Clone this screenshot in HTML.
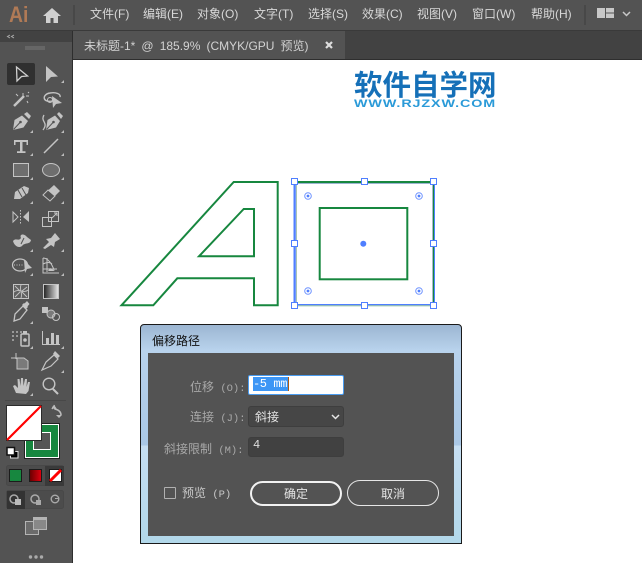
<!DOCTYPE html>
<html><head><meta charset="utf-8">
<style>
html,body{margin:0;padding:0;background:#fff}
#p{position:relative;width:642px;height:563px;overflow:hidden;background:#fff;font-family:"Liberation Sans","Noto Sans CJK SC",sans-serif}
.a{position:absolute;white-space:nowrap}
.m{top:6px;font-size:12px;line-height:16px;color:#d8d8d8}
.d{font-size:12px;line-height:16px;color:#a8a8a8;font-family:"Liberation Sans","Noto Sans CJK SC",sans-serif}
.d span{font-family:"Liberation Mono",monospace;font-size:10.5px}
svg{position:absolute;left:0;top:0}
</style></head><body><div id="p">
<div class="a" style="left:0;top:0;width:642px;height:30px;background:#535353;border-bottom:1px solid #3a3a3a"></div>
<div class="a" style="left:0;top:31px;width:642px;height:29px;background:#424242"></div>
<div class="a" style="left:73px;top:31px;width:569px;height:28px;background:#424242;border-bottom:1px solid #2e2e2e"></div>
<div class="a" style="left:73px;top:31px;width:272px;height:28px;background:#535353"></div>
<div class="a" style="left:0;top:31px;width:72px;height:532px;background:#535353;border-right:1px solid #3a3a3a"></div>
<div class="a" style="left:0;top:31px;width:72px;height:11px;background:#424242"></div>
<div class="a" style="left:72px;top:31px;width:1px;height:532px;background:#2e2e2e"></div>
<div class="a" style="left:9px;top:2px;font-size:22px;line-height:26px;font-weight:bold;color:#b07a56;transform:scaleX(.88);transform-origin:left">Ai</div>
<div class="a m" style="left:90px">文件(F)</div>
<div class="a m" style="left:143px">编辑(E)</div>
<div class="a m" style="left:197px">对象(O)</div>
<div class="a m" style="left:254px">文字(T)</div>
<div class="a m" style="left:308px">选择(S)</div>
<div class="a m" style="left:362px">效果(C)</div>
<div class="a m" style="left:417px">视图(V)</div>
<div class="a m" style="left:472px">窗口(W)</div>
<div class="a m" style="left:531px">帮助(H)</div>
<div class="a" style="left:84px;top:38px;font-size:12px;line-height:16px;color:#d2d2d2;word-spacing:2.75px">未标题-1* @ 185.9% (CMYK/GPU 预览)</div>
<div class="a" style="left:354px;top:66px;font-size:28.5px;line-height:36px;font-weight:bold;color:#1570b8;font-family:'Noto Sans CJK SC',sans-serif">软件自学网</div>
<div class="a" style="left:354px;top:98px;font-size:11px;line-height:12px;font-weight:bold;color:#2a9ad8;letter-spacing:.7px;transform:scaleX(1.3);transform-origin:left">WWW.RJZXW.COM</div>

<svg width="642" height="563" viewBox="0 0 642 563">
<!-- top bar icons -->
<path d="M52 8 L43 16 H46 V23 H50.5 V18 H53.5 V23 H58 V16 H61 Z" fill="#d0d0d0"/>
<rect x="73" y="5" width="2" height="20" fill="#484848"/>
<rect x="584" y="5" width="2" height="20" fill="#484848"/>
<rect x="597" y="8" width="8" height="10" fill="#c8c8c8"/><rect x="606" y="8" width="8" height="4.500" fill="#c8c8c8"/><rect x="606" y="13.500" width="8" height="4.500" fill="#c8c8c8"/>
<path d="M623 12 L626.5 15.5 L630 12" fill="none" stroke="#c8c8c8" stroke-width="1.5"/>
<path d="M326 42 L332 48 M332 42 L326 48" stroke="#ddd" stroke-width="2.2"/>
<path d="M10 35 L7.500 36.500 L10 38 M14 35 L11.500 36.500 L14 38" fill="none" stroke="#aaa" stroke-width="1"/>
<path d="M26 46v4M28 46v4M30 46v4M32 46v4M34 46v4M36 46v4M38 46v4M40 46v4M42 46v4M44 46v4" stroke="#7a7a7a" stroke-width="1"/>

<!-- tools -->
<g fill="#c4c4c4" stroke="none">
<rect x="7" y="63" width="28" height="22" rx="2" fill="#303030"/>
<path d="M16.500 67 L27.500 76 L21.500 76.500 L17 81 Z" fill="none" stroke="#cfcfcf" stroke-width="1.300"/>
<path d="M46 66 L58 76.500 L51 77 L46 82 Z"/>
<path d="M64 80v3h-3z" fill="#bbb"/>
<!-- wand -->
<path d="M14 106 L24 96" stroke="#c4c4c4" stroke-width="2.500"/><path d="M23 93v3M26 96h3M16 94l2 2M27 101l1 2M28 92l1 1" stroke="#c4c4c4" stroke-width="1"/>
<!-- lasso w/ arrow -->
<path d="M52 101 C42 103 42 94 50 93 C56 92 61 94 60 97" fill="none" stroke="#c4c4c4" stroke-width="1.400"/><circle cx="50" cy="100" r="2.500" fill="none" stroke="#c4c4c4"/><path d="M52 96 L62 103 L56 104 L53 108 Z"/>
<!-- pen -->
<path d="M13 130 L14.500 120 L22 115.500 L28 121 L23.500 127.500 Z"/><path d="M24 114 L29 119 L31 116 L27 112 Z"/><path d="M13.500 129.500 L20 122.500" stroke="#535353"/><circle cx="20.500" cy="122" r="1.300" fill="#535353"/><path d="M33 130v3h-3z" fill="#bbb"/>
<path d="M46 130 L47.500 120 L55 115.500 L60 121 L56 127.500 Z"/><path d="M57 114 L61 119 L63 116 L59 112 Z"/><path d="M46.500 129.500 L53 122.500" stroke="#535353"/><circle cx="53.500" cy="122" r="1.300" fill="#535353"/><path d="M44 115 C40 122 49 122 43 130" fill="none" stroke="#c4c4c4" stroke-width="1.300"/><path d="M64 130v3h-3z" fill="#bbb"/>
<!-- T -->
<path d="M14 140 H28 V145 H26.500 V142 H22.500 V151.300 H25.500 V153 H17 V151.300 H20 V142 H15.500 V145 H14 Z"/><path d="M33 153v3h-3z" fill="#bbb"/>
<path d="M44 153 L58 139" stroke="#c4c4c4" stroke-width="1.500"/><path d="M64 153v3h-3z" fill="#bbb"/>
<!-- rect, ellipse -->
<rect x="13.500" y="163.500" width="15" height="13" fill="#6e6e6e" stroke="#c4c4c4"/><path d="M33 177v3h-3z" fill="#bbb"/>
<ellipse cx="51" cy="170" rx="8.500" ry="6.500" fill="#6e6e6e" stroke="#c4c4c4"/><path d="M64 177v3h-3z" fill="#bbb"/>
<!-- brush, eraser -->
<path d="M14 199 L15 192 L24 186 L29 188 L28 193 L20 199 Z"/><path d="M18 190l4 7M22 188l4 7" stroke="#535353" stroke-width="1"/><path d="M33 201v3h-3z" fill="#bbb"/>
<path d="M43 195 L54 185 L60 191 L50 201 Z"/><path d="M43 195 L48 190 L55 196 L50 201 Z" fill="#535353" stroke="#c4c4c4"/><path d="M64 201v3h-3z" fill="#bbb"/>
<!-- reflect, scale -->
<path d="M13 212 L18 217 L13 222 Z" fill="none" stroke="#c4c4c4"/><path d="M29 211 L23 217 L29 222 Z"/><path d="M20.500 210v14" stroke="#c4c4c4" stroke-dasharray="1.500 1.500"/>
<rect x="42.500" y="217.500" width="9" height="9" fill="none" stroke="#c4c4c4"/><rect x="48.500" y="211.500" width="10" height="10" fill="none" stroke="#c4c4c4"/><path d="M52 218 L57 213 M54 213h3v3" fill="none" stroke="#c4c4c4"/>
<!-- warp, pin -->
<path d="M13 241 C16 237 18 242 21 238 C19 234 24 233 27 237 L31 240 C30 245 25 242 22 246 C18 249 14 245 13 241 Z"/><path d="M15 236 l4 3 M24 238l-3 6" stroke="#535353"/><path d="M33 249v3h-3z" fill="#bbb"/>
<path d="M43 248 L49 242 L46 239 L51 238 L55 233 L60 239 L55 242 L54 247 L51 245 L45 249 Z"/><path d="M64 249v3h-3z" fill="#bbb"/>
<!-- shape builder, mesh -->
<ellipse cx="20" cy="265" rx="7.500" ry="6" fill="none" stroke="#c4c4c4" stroke-width="1.200"/><path d="M14 265h9" stroke="#c4c4c4" stroke-dasharray="1 1.500"/><path d="M24 260 L32 268 L27 269 L25 273 Z"/><path d="M33 273v3h-3z" fill="#bbb"/>
<path d="M43 258 V273 H59 M43 258 C48 258 52 264 54 270 M43 264 C47 262 50 262 52 264 M47 258 L47 272 M43 269 H57" fill="none" stroke="#c4c4c4" stroke-width="1"/><path d="M50 268 L55 271 H48Z"/><path d="M64 273v3h-3z" fill="#bbb"/>
<!-- mesh, gradient -->
<rect x="13.500" y="284.500" width="15" height="14" fill="#606060" stroke="#c4c4c4"/><path d="M14 292 C18 288 24 294 28 290 M21 285 C19 290 23 293 21 298 M15 286l5 5M27 287l-5 4M15 297l5-5M27 297l-5-5" fill="none" stroke="#c4c4c4" stroke-width=".9"/>
<defs><linearGradient id="g"><stop offset="0" stop-color="#222"/><stop offset="1" stop-color="#e8e8e8"/></linearGradient></defs>
<rect x="43.500" y="284.500" width="15" height="14" fill="url(#g)" stroke="#c4c4c4"/>
<!-- eyedropper, blend -->
<path d="M14 321 L15 314 L23 306 L27 310 L20 319 Z" fill="none" stroke="#c4c4c4" stroke-width="1.300"/><path d="M22 305 L24 303 L27 306 L28 307 L26 309 Z M24 304 L27 301 L29.500 304 L27 307 Z"/><path d="M33 321v3h-3z" fill="#bbb"/>
<rect x="42" y="307" width="6" height="6"/><circle cx="51" cy="314" r="4" fill="#7a7a7a" stroke="#c4c4c4"/><circle cx="56" cy="317" r="3.500" fill="none" stroke="#c4c4c4"/>
<!-- spray, chart -->
<path d="M12 331h2v2h-2zM16 331h2v2h-2zM20 331h2v2h-2zM12 335h2v2h-2zM16 335h2v2h-2zM12 339h2v2h-2z" fill="#999"/><rect x="21" y="334" width="8" height="12" rx="1" fill="none" stroke="#c4c4c4" stroke-width="1.500"/><rect x="23" y="331" width="4" height="3"/><circle cx="25" cy="340" r="1.800"/><path d="M33 346v3h-3z" fill="#bbb"/>
<path d="M42.500 331 V344.500 H60" fill="none" stroke="#c4c4c4"/><rect x="46" y="338" width="3" height="6"/><rect x="51" y="333" width="3" height="11"/><rect x="56" y="335" width="3" height="9"/><path d="M64 346v3h-3z" fill="#bbb"/>
<!-- artboard, slice -->
<path d="M11 358h6M16 353v6" stroke="#c4c4c4"/><path d="M17 358 H24 L28 361 V369 H17 Z" fill="#7a7a7a" stroke="#c4c4c4"/><path d="M42 370 L46 362 L54 355 L58 359 L51 366 Z" fill="none" stroke="#c4c4c4" stroke-width="1.200"/><path d="M53 354 L55 351 L60 356 L58 358 Z"/><path d="M64 370v3h-3z" fill="#bbb"/>
<!-- hand, zoom -->
<path d="M16 393 L13 386 L15 385 L18 388 L17.500 379 L19.500 379 L20.500 386 L21 378 L23 378 L23.500 386 L25 379 L27 379 L26.500 387 L28 382 L30 382 L28.500 391 L26 394 Z"/><path d="M33 393v3h-3z" fill="#bbb"/>
<circle cx="49" cy="384" r="5.800" fill="none" stroke="#c4c4c4" stroke-width="1.400"/><path d="M53 389 L58 394" stroke="#c4c4c4" stroke-width="2"/>
</g>
<rect x="5" y="400" width="61" height="1" fill="#484848"/>

<!-- fill/stroke -->
<rect x="24.500" y="423.500" width="35" height="35" fill="#fff" stroke="#222" stroke-width="1"/>
<rect x="26" y="425" width="32" height="32" fill="#17873f"/>
<rect x="33.500" y="432.500" width="17" height="17" fill="#555" stroke="#fff" stroke-width="1"/>
<rect x="6.500" y="405.500" width="35" height="35" fill="#fff" stroke="#2b2b2b"/>
<path d="M7 440 L41 406" stroke="#f00" stroke-width="2.200"/>
<path d="M52 409 L54 406 L56 409 H55 C59 410 61 412 61 415" fill="none" stroke="#bbb" stroke-width="1.500"/><path d="M56 415 H62 L59 418 Z M52 407 L55 405 V410 Z" fill="#bbb"/>
<rect x="10.500" y="451.500" width="7.500" height="6.500" fill="#000" stroke="#ddd"/><rect x="7" y="447.500" width="7.500" height="7.500" fill="#fff" stroke="#111" stroke-width="1.500"/>
<rect x="6.500" y="465.500" width="57" height="20" rx="2" fill="#4c4c4c" stroke="#484848"/>
<rect x="45" y="466" width="19" height="20" fill="#3a3a3a"/>
<rect x="9.500" y="469.500" width="12" height="12" fill="#17873f" stroke="#1c1c1c"/>
<defs><linearGradient id="r"><stop offset="0" stop-color="#600"/><stop offset="1" stop-color="#e00010"/></linearGradient></defs>
<rect x="29.500" y="469.500" width="12" height="12" fill="url(#r)" stroke="#1c1c1c"/>
<rect x="49.500" y="469.500" width="12" height="12" fill="#fff" stroke="#1c1c1c"/><path d="M50 481 L61 470" stroke="#f00" stroke-width="3"/>
<rect x="6.500" y="490.500" width="57" height="18" rx="2" fill="#4c4c4c" stroke="#484848"/>
<rect x="7" y="491" width="18" height="18" fill="#333"/>
<circle cx="14" cy="499" r="4" fill="none" stroke="#aaa" stroke-width="1.500"/><rect x="15" y="499" width="6" height="6" fill="#bbb"/>
<circle cx="35" cy="499" r="4" fill="none" stroke="#aaa" stroke-width="1.500"/><rect x="36" y="500" width="5" height="5" fill="#aaa"/>
<circle cx="55" cy="499" r="3.800" fill="none" stroke="#aaa" stroke-width="1.400"/><path d="M55 499h4v-1h-4z" fill="#aaa"/>
<rect x="25.500" y="521.500" width="13" height="13" fill="#6b6b6b" stroke="#b4b4b4"/><rect x="33.500" y="517.500" width="13" height="12" fill="#888" stroke="#b4b4b4"/><rect x="33" y="517" width="14" height="3" fill="#b4b4b4"/>
<circle cx="30.500" cy="557" r="1.700" fill="#aaa"/><circle cx="36" cy="557" r="1.700" fill="#aaa"/><circle cx="41.500" cy="557" r="1.700" fill="#aaa"/>

<!-- artwork -->
<path d="M233.700 182 H277.700 V305.300 H254 V278.300 H177.300 L153.300 305.300 H121.500 Z M243.700 209 L199 256.300 H254 V209 Z" fill="none" stroke="#17873f" stroke-width="2"/>
<!-- selection frame edges -->
<rect x="295" y="183" width="138" height="1" fill="#9cb4d0"/>
<rect x="295" y="181" width="139" height="2" fill="#17873f"/>
<rect x="296" y="183" width="1" height="121" fill="#a8c4b4"/>
<rect x="293.500" y="181" width="2.300" height="125" fill="#4f7fff"/>
<rect x="432" y="183" width="1" height="122" fill="#a8b8c8"/>
<rect x="433" y="181" width="1" height="124" fill="#17873f"/>
<rect x="434" y="181" width="1" height="125" fill="#4f7fff"/>
<rect x="295" y="304" width="139" height="1.300" fill="#4f7fff"/>
<rect x="295" y="305.300" width="139" height="1" fill="#8fbfa0"/>
<rect x="319.700" y="208" width="87.600" height="71.300" fill="none" stroke="#17873f" stroke-width="2"/>
<circle cx="363.300" cy="243.700" r="3" fill="#4f7fff"/>
<g fill="#fff" stroke="#4f7fff">
<rect x="291.500" y="178.500" width="6" height="6"/><rect x="361.500" y="178.500" width="6" height="6"/><rect x="430.500" y="178.500" width="6" height="6"/>
<rect x="291.500" y="240.500" width="6" height="6"/><rect x="430.500" y="240.500" width="6" height="6"/>
<rect x="291.500" y="302.500" width="6" height="6"/><rect x="361.500" y="302.500" width="6" height="6"/><rect x="430.500" y="302.500" width="6" height="6"/>
</g>
<g fill="none" stroke="#6f94ff">
<circle cx="308" cy="196" r="3.300"/><circle cx="419" cy="196" r="3.300"/><circle cx="308" cy="291" r="3.300"/><circle cx="419" cy="291" r="3.300"/>
</g>
<g fill="#4f7fff"><circle cx="308" cy="196" r="1.400"/><circle cx="419" cy="196" r="1.400"/><circle cx="308" cy="291" r="1.400"/><circle cx="419" cy="291" r="1.400"/></g>
</svg>

<!-- dialog -->
<div class="a" style="left:140px;top:324px;width:320px;height:218px;border:1px solid #1a1a1a;border-radius:4px 4px 0 0;background:linear-gradient(#9cb6d2 0,#b8d2ec 25px,#aac8e6 120px,#c6def2 121px,#b2d8ea 218px)"></div>
<div class="a" style="left:148px;top:353px;width:306px;height:183px;background:#535353"></div>
<div class="a" style="left:152px;top:333px;font-size:12px;line-height:16px;color:#111">偏移路径</div>
<div class="a d" style="left:190px;top:379px">位移<span> (O):</span></div>
<div class="a d" style="left:190px;top:409px">连接<span> (J):</span></div>
<div class="a d" style="left:164px;top:441px">斜接限制<span> (M):</span></div>
<div class="a" style="left:248px;top:375px;width:94px;height:18px;background:#fff;border:1px solid #4a9cf0;border-radius:2px"></div>
<div class="a" style="left:253px;top:377px;width:35px;height:14px;background:#3d96f5;border-right:1px solid #b05a10"></div>
<div class="a" style="left:253px;top:376px;font-family:'Liberation Mono',monospace;font-size:12px;line-height:16px;letter-spacing:-.4px;color:#fff">-5 mm</div>
<div class="a" style="left:248px;top:406px;width:94px;height:19px;background:#464646;border:1px solid #3e3e3e;border-radius:3px"></div>
<div class="a" style="left:255px;top:409px;font-size:12px;line-height:16px;color:#e2e2e2">斜接</div>
<svg width="642" height="563" style="pointer-events:none"><path d="M332 415 L335.500 418.500 L339 415" fill="none" stroke="#e6e6e6" stroke-width="1.500"/></svg>
<div class="a" style="left:248px;top:437px;width:94px;height:18px;background:#414141;border:1px solid #3e3e3e;border-radius:3px"></div>
<div class="a" style="left:253px;top:437px;font-family:'Liberation Mono',monospace;font-size:12px;line-height:16px;color:#ddd">4</div>
<div class="a" style="left:164px;top:487px;width:10px;height:10px;border:1px solid #b0b0b0;border-radius:1px"></div>
<div class="a d" style="left:182px;top:485px;color:#c8c8c8">预览<span> (P)</span></div>
<div class="a" style="left:250px;top:481px;width:88px;height:21px;border:2px solid #f2f2f2;border-radius:13px;text-align:center;font-size:12px;line-height:23px;color:#e4e4e4">确定</div>
<div class="a" style="left:347px;top:480px;width:90px;height:24px;border:1px solid #e6e6e6;border-radius:13px;text-align:center;font-size:12px;line-height:26px;color:#e4e4e4">取消</div>
</div></body></html>
